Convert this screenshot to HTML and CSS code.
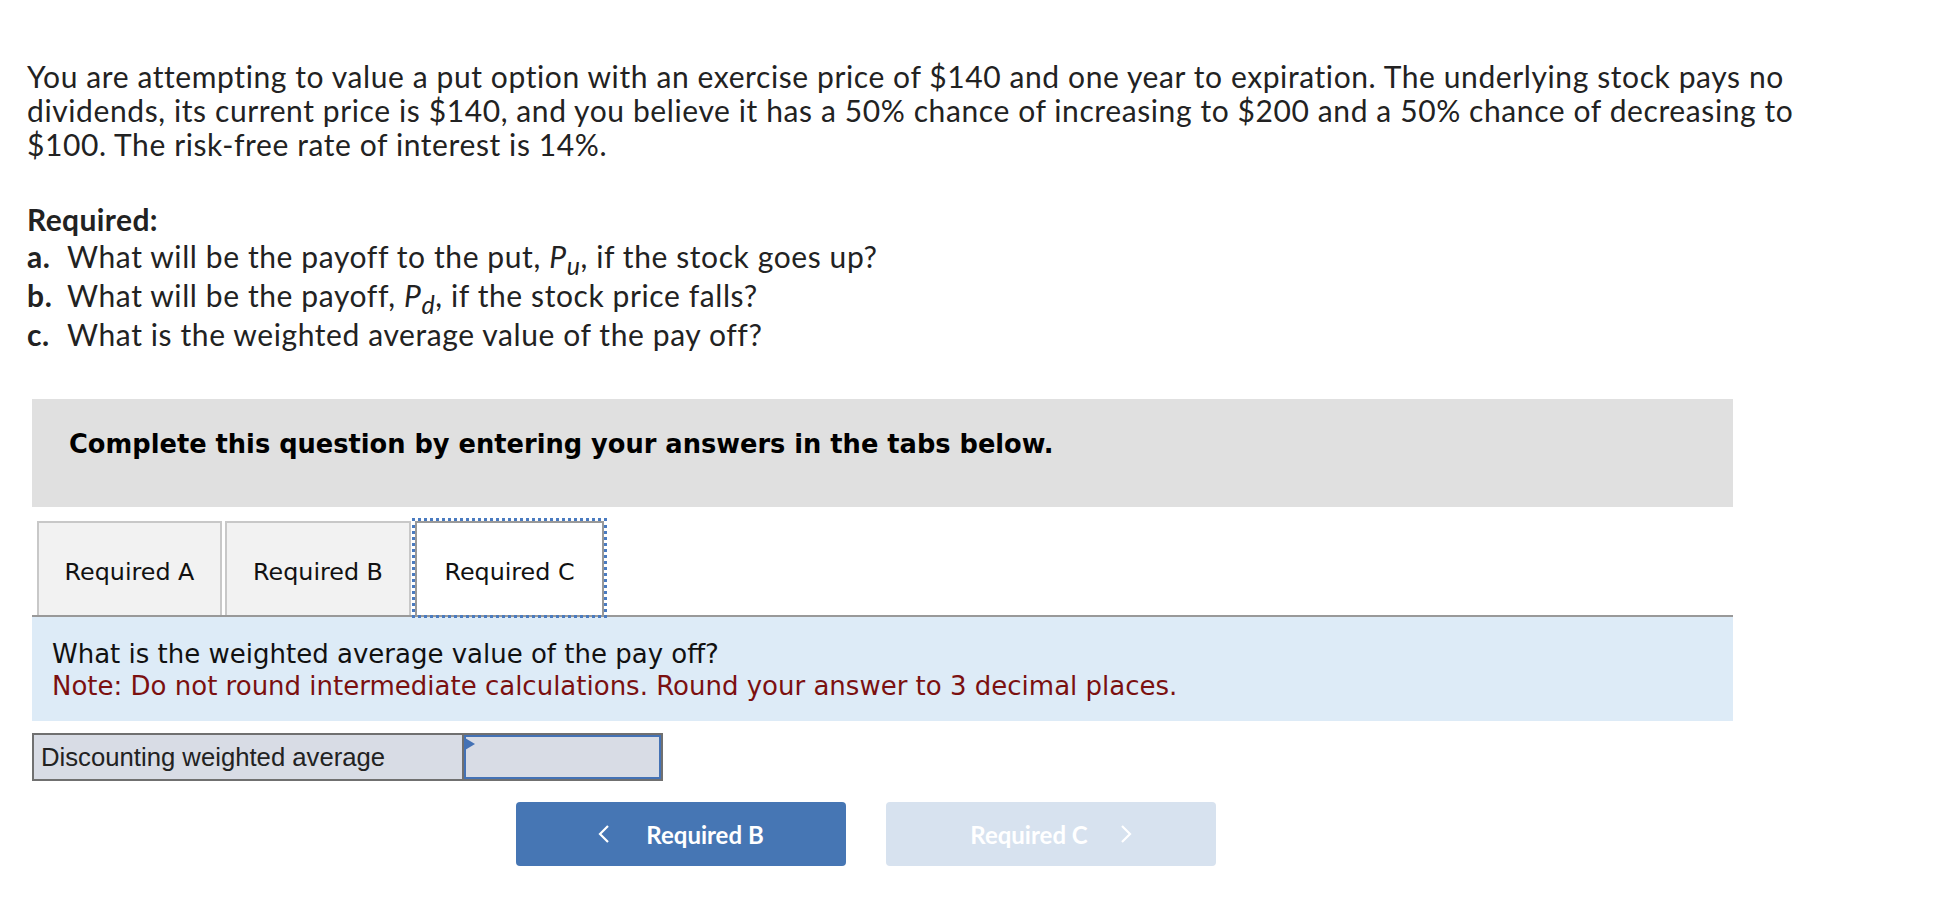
FILE: index.html
```html
<!DOCTYPE html>
<html lang="en">
<head>
  <meta charset="UTF-8" />
  <title>Put option valuation</title>
  <link rel="stylesheet" href="styles.css">
</head>
<body>
  <div class="page">
    <p class="intro">You are attempting to value a put option with an exercise price of $140 and one year to expiration. The underlying stock pays no dividends, its current price is $140, and you believe it has a 50% chance of increasing to $200 and a 50% chance of decreasing to $100. The risk-free rate of interest is 14%.</p>

    <div class="required">
      <div class="req-title">Required:</div>
      <div class="req-item"><span class="mark">a.</span>What will be the payoff to the put, <i class="sym">P<sub>u</sub></i>, if the stock goes up?</div>
      <div class="req-item"><span class="mark">b.</span>What will be the payoff, <i class="sym">P<sub>d</sub></i>, if the stock price falls?</div>
      <div class="req-item"><span class="mark">c.</span>What is the weighted average value of the pay off?</div>
    </div>

    <div class="quiz">
      <div class="banner">Complete this question by entering your answers in the tabs below.</div>

      <div class="tabs">
        <div class="tab">Required A</div>
        <div class="tab tab-b">Required B</div>
        <div class="tab tab-active">Required C</div>
      </div>

      <div class="panel">
        <div class="question">What is the weighted average value of the pay off?</div>
        <div class="note">Note: Do not round intermediate calculations. Round your answer to 3 decimal places.</div>
      </div>

      <div class="answer-row">
        <div class="answer-label">Discounting weighted average</div>
        <div class="answer-input"><span class="marker"></span></div>
      </div>

      <div class="nav">
        <button class="nav-btn nav-prev">
          <svg width="12" height="18" viewBox="0 0 12 18"><polyline points="10,1 2,9 10,17" fill="none" stroke="#fff" stroke-width="2.2"/></svg>
          <span>Required B</span>
        </button>
        <button class="nav-btn nav-next">
          <span>Required C</span>
          <svg width="12" height="18" viewBox="0 0 12 18"><polyline points="2,1 10,9 2,17" fill="none" stroke="#fff" stroke-width="2.2"/></svg>
        </button>
      </div>
    </div>
  </div>
</body>
</html>
```

FILE: styles.css
```css
body {
  margin: 0;
  font-family: Lato, "Liberation Sans", sans-serif;
  color: #222;
  background: #fff;
}
.page {
  padding: 59px 0 0 27px;
}
.intro {
  margin: 0;
  width: 1845px;
  font-size: 30px;
  letter-spacing: 0.6px;
  line-height: 34px;
}
.required {
  margin-top: 40px;
}
.req-title {
  font-size: 30px;
  letter-spacing: 0.4px;
  font-weight: bold;
  line-height: 36px;
}
.req-item {
  font-size: 30px;
  letter-spacing: 0.6px;
  line-height: 39px;
}
.mark {
  display: inline-block;
  width: 40px;
  font-weight: bold;
}
.sym sub {
  font-size: 25px;
  vertical-align: -7px;
  line-height: 0;
}
.quiz {
  margin: 45px 0 0 5px;
  width: 1701px;
}
.banner {
  height: 108px;
  box-sizing: border-box;
  padding: 30px 37px 0;
  background: #e0e0e0;
  font-family: "DejaVu Sans", Verdana, sans-serif;
  font-weight: bold;
  font-size: 25.7px;
  line-height: 30px;
  color: #000;
}
.tabs {
  display: flex;
  gap: 3px;
  margin-top: 14px;
  padding-left: 5px;
}
.tab {
  width: 185px;
  height: 94px;
  box-sizing: border-box;
  padding-top: 5px;
  border: 2px solid #c8c8c8;
  border-bottom: none;
  background: #f2f2f2;
  display: flex;
  align-items: center;
  justify-content: center;
  font-family: "DejaVu Sans", Verdana, sans-serif;
  font-size: 23.8px;
  color: #111;
}
.tab-b {
  width: 186px;
}
.tab-active {
  width: 189px;
  margin-left: 1px;
  background: #fff;
  border-color: #999;
  outline: 3px dotted #4a7bc0;
}
.panel {
  border-top: 2px solid #999;
  background: #ddebf7;
  padding: 21px 20px 19px;
  font-family: "DejaVu Sans", Verdana, sans-serif;
  font-size: 26px;
  line-height: 32px;
  color: #111;
}
.note {
  color: #7b1010;
}
.answer-row {
  display: flex;
  width: 631px;
  height: 48px;
  box-sizing: border-box;
  margin-top: 12px;
  border: 2px solid #707070;
  background: #d8dce5;
}
.answer-label {
  width: 428px;
  padding-left: 7px;
  box-sizing: border-box;
  display: flex;
  align-items: center;
  font-family: "Liberation Sans", Arial, sans-serif;
  font-size: 25.7px;
  color: #222;
}
.answer-input {
  flex: 1;
  position: relative;
  border-left: 2px solid #707070;
  box-shadow: inset 0 0 0 2px #4472b5;
}
.marker {
  position: absolute;
  top: 3px;
  left: 1px;
  width: 0;
  height: 0;
  border-top: 6px solid transparent;
  border-bottom: 6px solid transparent;
  border-left: 10px solid #4472b5;
}
.nav {
  display: flex;
  gap: 40px;
  margin-top: 21px;
  padding-left: 484px;
}
.nav-btn {
  width: 330px;
  height: 64px;
  border: none;
  border-radius: 4px;
  display: flex;
  align-items: center;
  justify-content: center;
  font-family: Lato, "Liberation Sans", sans-serif;
  font-weight: bold;
  font-size: 24px;
  color: #fff;
}
.nav-prev {
  gap: 36px;
  background: #4676b4;
}
.nav-next {
  gap: 32px;
  background: #d7e2ef;
}
```
